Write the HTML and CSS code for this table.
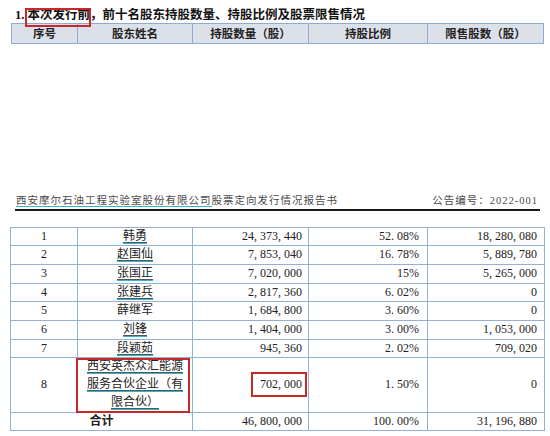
FILE: index.html
```html
<!DOCTYPE html>
<html lang="zh-CN">
<head>
<meta charset="utf-8">
<title>股票定向发行情况报告书</title>
<link rel="stylesheet" href="styles.css">
</head>
<body>
<div class="page">
  <div class="title"><span class="num">1.</span><span class="hl">本次发行前</span>，前十名股东持股数量、持股比例及股票限售情况</div>
  <table class="t1">
    <colgroup><col class="w1a"><col class="w2"><col class="w3"><col class="w4"><col class="w5a"></colgroup>
    <tr><th>序号</th><th>股东姓名</th><th>持股数量（股）</th><th>持股比例</th><th>限售股数（股）</th></tr>
  </table>

  <div class="rh">
    <span class="rh-left"><span class="co">西安摩尔石油工程实验室股份有限公司</span>股票定向发行情况报告书</span>
    <span class="rh-right">公告编号：2022-001</span>
  </div>

  <table class="t2">
    <colgroup><col class="w1b"><col class="w2"><col class="w3"><col class="w4"><col class="w5b"></colgroup>
    <tr><td class="ctr">1</td><td class="ctr"><span class="u">韩勇</span></td><td class="n3">24, 373, 440</td><td class="n4">52. 08%</td><td class="n5">18, 280, 080</td></tr>
    <tr><td class="ctr">2</td><td class="ctr"><span class="u">赵国仙</span></td><td class="n3">7, 853, 040</td><td class="n4">16. 78%</td><td class="n5">5, 889, 780</td></tr>
    <tr><td class="ctr">3</td><td class="ctr"><span class="u">张国正</span></td><td class="n3">7, 020, 000</td><td class="n4">15%</td><td class="n5">5, 265, 000</td></tr>
    <tr><td class="ctr">4</td><td class="ctr"><span class="u">张建兵</span></td><td class="n3">2, 817, 360</td><td class="n4">6. 02%</td><td class="n5">0</td></tr>
    <tr><td class="ctr">5</td><td class="ctr">薛继军</td><td class="n3">1, 684, 800</td><td class="n4">3. 60%</td><td class="n5">0</td></tr>
    <tr><td class="ctr">6</td><td class="ctr"><span class="u">刘锋</span></td><td class="n3">1, 404, 000</td><td class="n4">3. 00%</td><td class="n5">1, 053, 000</td></tr>
    <tr><td class="ctr">7</td><td class="ctr"><span class="u">段颖茹</span></td><td class="n3">945, 360</td><td class="n4">2. 02%</td><td class="n5">709, 020</td></tr>
    <tr><td class="ctr">8</td><td class="ctr boxed"><span class="u">西安英杰众汇能源</span><br><span class="u">服务合伙企业（有</span><br><span class="u">限合伙）</span></td><td class="n3"><span class="box">702, 000</span></td><td class="n4">1. 50%</td><td class="n5">0</td></tr>
    <tr class="tot"><td class="ctr" colspan="2">合计</td><td class="n3">46, 800, 000</td><td class="n4">100. 00%</td><td class="n5">31, 196, 880</td></tr>
  </table>
</div>
</body>
</html>
```

FILE: styles.css
```css
body {
  margin: 0;
  background: #ffffff;
  color: #222;
  font-family: "Liberation Serif", "Noto Sans CJK SC", serif;
}

.page {
  padding-top: 7px;
}

.title {
  margin-left: 15px;
  font-weight: bold;
  font-size: 12.5px;
  line-height: 16px;
  color: #111;
}

.hl {
  display: inline-block;
  position: relative;
  margin-left: 3px;
}

.hl::after {
  content: "";
  position: absolute;
  left: -2px;
  right: -1px;
  top: 1px;
  bottom: -4px;
  border: 2px solid #c8282c;
}

.t1, .t2 {
  border-collapse: collapse;
  table-layout: fixed;
}

.w1a { width: 66px; }
.w1b { width: 67px; }
.w2 { width: 115px; }
.w3 { width: 116px; }
.w4 { width: 119px; }
.w5a { width: 116px; }
.w5b { width: 117px; }

.t1 {
  margin-left: 11px;
  width: 532px;
}

.t1 th {
  background: #dce0e9;
  border: 1px solid #8eaad6;
  padding: 0;
  font-family: "Noto Sans CJK SC", sans-serif;
  font-weight: bold;
  font-size: 11.5px;
  line-height: 18.5px;
  color: #222;
}

.rh {
  display: flex;
  justify-content: space-between;
  align-items: flex-end;
  margin: 150px 10px 0 15px;
  padding: 0 2px 1px 1px;
  border-bottom: 2px solid #1a1a1a;
  font-size: 10.5px;
  line-height: 14px;
  letter-spacing: 1px;
  color: #4a4a4a;
}

.co {
  border-bottom: 1px solid #38b4cc;
}

.t2 {
  margin: 16px 0 0 10px;
  width: 534px;
}

.t2 td {
  border: 1px solid #94afda;
  padding: 0;
  font-size: 12px;
  line-height: 17.7px;
  color: #222;
  vertical-align: middle;
}

.ctr { text-align: center; }
.n3 { text-align: right; padding-right: 6px !important; }
.n4 { text-align: right; padding-right: 8px !important; }
.n5 { text-align: right; padding-right: 7px !important; }

.u {
  text-decoration: underline;
  text-decoration-color: #555;
  text-underline-offset: 2px;
  border-bottom: 1.5px solid #35b5cc;
}

.boxed {
  position: relative;
}

.boxed::after {
  content: "";
  position: absolute;
  left: -2px;
  right: 2px;
  top: 0;
  bottom: -1px;
  border: 2px solid #c42a27;
}

.box {
  display: inline-block;
  border: 2px solid #c42a27;
  padding: 3px 3px 3px 7px;
  margin-right: -5px;
  line-height: 15px;
}

.tot td {
  font-weight: normal;
}

.tot td:first-child {
  font-weight: bold;
}
```
